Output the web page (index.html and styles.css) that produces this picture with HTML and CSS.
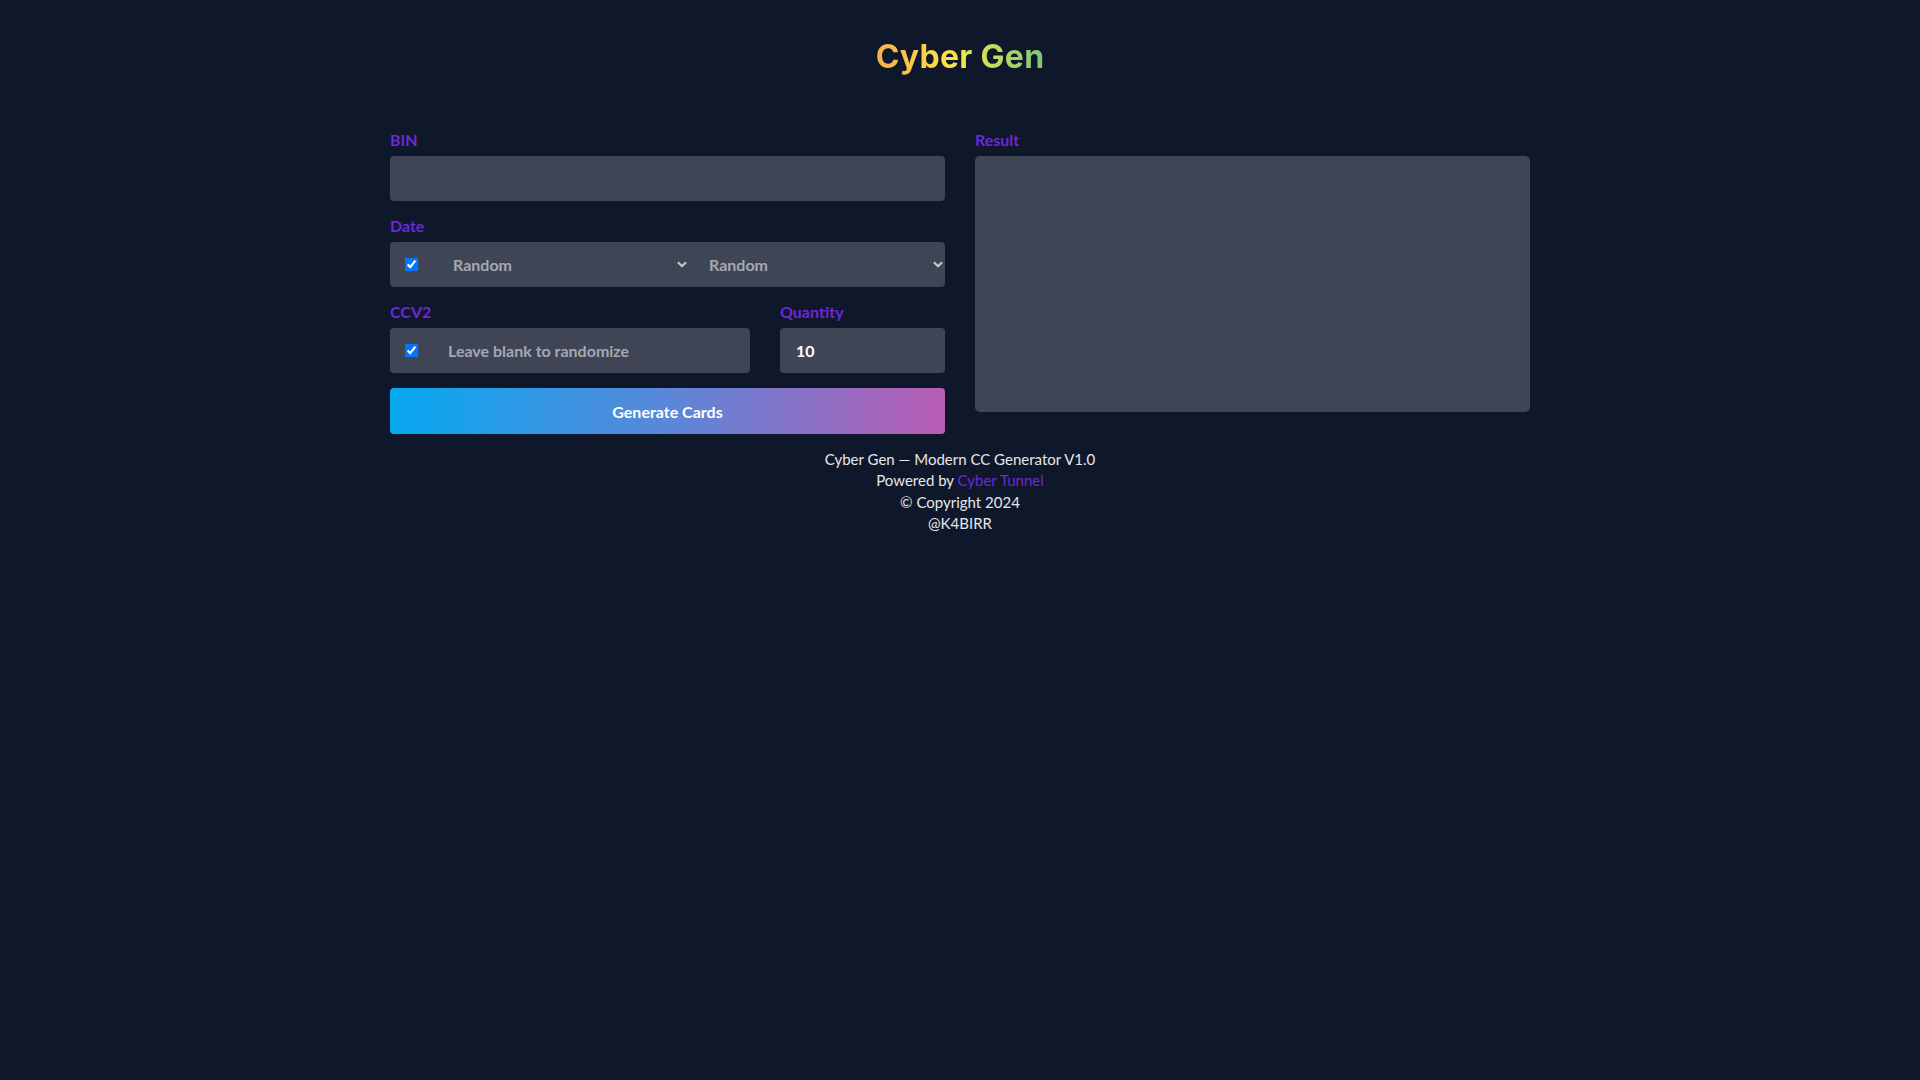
FILE: index.html
```html
<!DOCTYPE html>
<html lang="en">
<head>
<meta charset="utf-8">
<title>Cyber Gen</title>
<link rel="stylesheet" href="styles.css">
</head>
<body>
<header class="header">
  <h1 class="title">Cyber Gen</h1>
</header>
<main class="container">
  <div class="col">
    <div class="group">
      <label class="label" for="bin">BIN</label>
      <input class="field" id="bin" type="text">
    </div>
    <div class="group">
      <label class="label">Date</label>
      <div class="input-group">
        <span class="addon"><input type="checkbox" class="check" checked></span>
        <select class="select"><option>Random</option></select>
        <select class="select"><option>Random</option></select>
      </div>
    </div>
    <div class="group row2">
      <div class="ccv">
        <label class="label">CCV2</label>
        <div class="input-group">
          <span class="addon"><input type="checkbox" class="check" checked></span>
          <input class="inner" type="text" placeholder="Leave blank to randomize">
        </div>
      </div>
      <div class="qty">
        <label class="label">Quantity</label>
        <input class="field qty-field" type="text" value="10">
      </div>
    </div>
    <button class="btn" type="button">Generate Cards</button>
  </div>
  <div class="col">
    <div class="group">
      <label class="label">Result</label>
      <textarea class="result"></textarea>
    </div>
  </div>
</main>
<footer class="footer">
  <p>Cyber Gen — Modern CC Generator V1.0</p>
  <p>Powered by <a class="link" href="#">Cyber Tunnel</a></p>
  <p>© Copyright 2024</p>
  <p>@K4BIRR</p>
</footer>
</body>
</html>
```
FILE: styles.css
```css
* { box-sizing: border-box; }
html, body { margin: 0; padding: 0; }
body {
  background: #0f172a;
  font-family: Lato, "Liberation Sans", sans-serif;
  color: #e5e7eb;
  font-size: 16px;
  min-height: 1080px;
}
.header {
  display: flex;
  justify-content: center;
  padding-top: 39px;
}
.title {
  margin: 0;
  font-family: Inter, "Open Sans", sans-serif;
  font-weight: 700;
  font-size: 32px;
  line-height: 36px;
  letter-spacing: 0.3px;
  background: linear-gradient(90deg, #f5b04c 0%, #fde047 42%, #e6e84c 55%, #7cc47d 100%);
  -webkit-background-clip: text;
  background-clip: text;
  color: transparent;
}
.container {
  width: 1140px;
  margin: 53px auto 0;
  display: grid;
  grid-template-columns: 1fr 1fr;
  column-gap: 30px;
  align-items: start;
}
.col { display: flex; flex-direction: column; }
.group { margin-bottom: 13px; }
.label {
  display: block;
  color: #6d28d9;
  font-weight: 700;
  font-size: 16px;
  line-height: 24px;
  margin-bottom: 4px;
}
.field, .inner, .select, .result {
  font-family: Lato, "Liberation Sans", sans-serif;
  font-size: 16px;
  font-weight: 700;
  border: none;
  outline: none;
  color: #ffffff;
  background: #3f4555;
}
.field {
  display: block;
  width: 100%;
  height: 45px;
  border-radius: 4px;
  padding: 0 16px;
}
.input-group {
  display: flex;
  height: 45px;
  background: #3f4555;
  border-radius: 4px;
  overflow: hidden;
  align-items: stretch;
}
.addon {
  display: flex;
  align-items: center;
  padding: 0 15px;
}
.check {
  margin: 0;
  width: 13px;
  height: 13px;
}
.select {
  flex: 1;
  min-width: 0;
  -webkit-appearance: none;
  appearance: none;
  padding: 0 20px;
  color: #a3a8b4;
  background-color: transparent;
  background-image: url("data:image/svg+xml;utf8,<svg xmlns='http://www.w3.org/2000/svg' width='10' height='7' viewBox='0 0 10 7'><path d='M1 1.2 L5 5.2 L9 1.2' fill='none' stroke='%23c3c7d0' stroke-width='2.2'/></svg>");
  background-repeat: no-repeat;
  background-position: right 2px center;
  background-size: 10px 7px;
}
.inner {
  flex: 1;
  min-width: 0;
  background: transparent;
  padding: 0 15px;
}
.inner::placeholder { color: #a3a8b4; opacity: 1; }
.row2 {
  display: grid;
  grid-template-columns: 360px 1fr;
  column-gap: 30px;
  margin-bottom: 15px;
}
.qty-field { color: #ffffff; }
.btn {
  display: block;
  width: 100%;
  height: 46px;
  border: none;
  border-radius: 4px;
  background: linear-gradient(90deg, #06a9f1 0%, #5b87d9 50%, #b95cb4 100%);
  color: #ffffff;
  font-family: Lato, "Liberation Sans", sans-serif;
  font-weight: 700;
  font-size: 16px;
  cursor: pointer;
}
.result {
  display: block;
  width: 100%;
  height: 256px;
  border-radius: 5px;
  resize: none;
  padding: 12px 16px;
}
.footer {
  margin-top: 15px;
  text-align: center;
  font-size: 15px;
  line-height: 21.33px;
  color: #e5e7eb;
}
.footer p { margin: 0; }
.link { color: #6d28d9; text-decoration: none; }
```
